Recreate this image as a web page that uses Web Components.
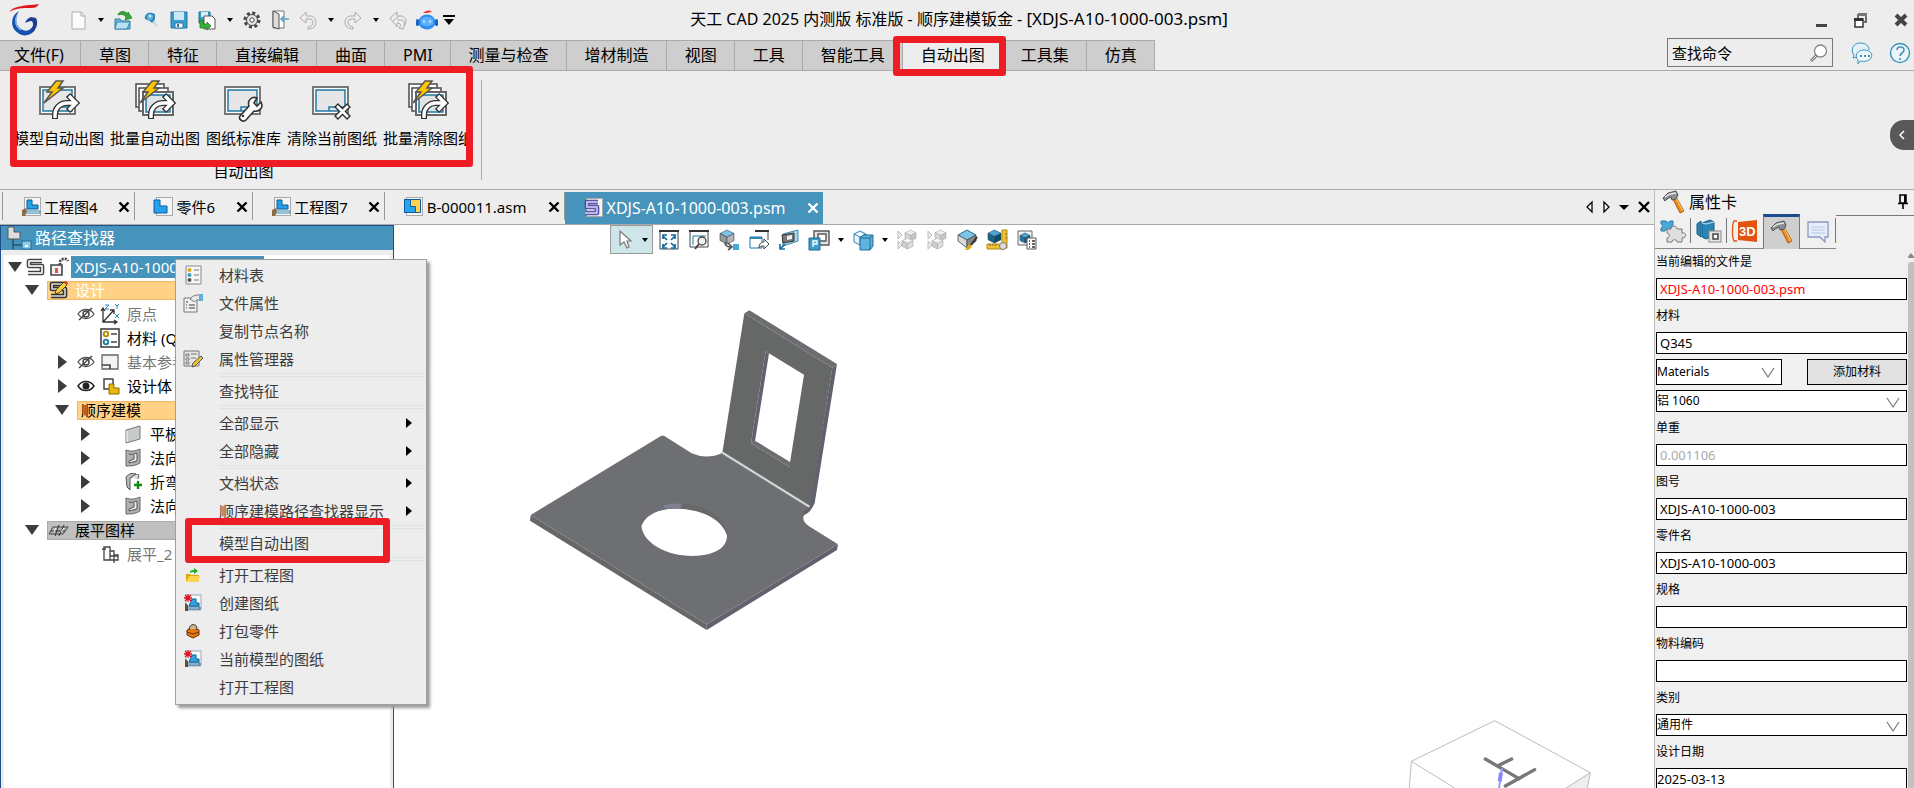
<!DOCTYPE html>
<html lang="zh-CN">
<head>
<meta charset="utf-8">
<title>天工 CAD 2025</title>
<style>
html,body{margin:0;height:100%;overflow:hidden}
body{font-family:"Noto Sans","Noto Sans CJK SC",sans-serif;font-size:15px;line-height:20px;color:#000;background:#ededed}
</style>
</head>
<body>
<cad-app></cad-app>
<script>
const BASE = '*,*::before,*::after{box-sizing:border-box}button,input,select{font:inherit;color:inherit;margin:0;padding:0;border:0;background:none;border-radius:0}button{display:flex;align-items:center;justify-content:center}cad-icon{flex:none}';
const def = (name, css, html) => customElements.define(name, class extends HTMLElement {
  connectedCallback() {
    if (this.shadowRoot) return;
    const root = this.attachShadow({ mode: 'open' });
    const t = document.createElement('template');
    t.innerHTML = `<style>${BASE}${css}</style>${typeof html === 'function' ? html(this) : html}`;
    root.append(t.content.cloneNode(true));
  }
});

/* shared icon parts */
const sheet = (x, y) => `<rect x="${x}" y="${y}" width="35" height="27" fill="#fff" stroke="#777" stroke-width="2"/><rect x="${x + 3}" y="${y + 3}" width="29" height="21" fill="#e6e6e6" stroke="#1b7aa5" stroke-width="1.5"/><path d="M${x + 16} ${y + 24}v-4h16" fill="none" stroke="#1b7aa5" stroke-width="1.5"/>`;
const bolt = '<path d="M17 1h7l-5 7h5L5 23l8-11H8z" fill="#ffc400" stroke="#555" stroke-width="1.5"/>';
const turn = '<path d="M16 39v-4c0-7 5-12 12-12h6M29 15l8 8-8 8" fill="none" stroke="#333" stroke-width="6"/><path d="M16 38v-3c0-7 5-12 12-12h7M30 16l7 7-7 7" fill="none" stroke="#fff" stroke-width="3.4"/>';
const multi = `<rect x="1" y="4" width="28" height="23" fill="#fff" stroke="#555" stroke-width="1.6"/><rect x="4" y="8" width="29" height="23" fill="#fff" stroke="#555" stroke-width="1.6"/><rect x="8" y="12" width="30" height="23" fill="#fff" stroke="#666" stroke-width="2"/><rect x="11" y="15" width="24" height="17" fill="#dfe3e5" stroke="#1b7aa5" stroke-width="1.5"/>${bolt}${turn}`;
const undo = '<path d="M2 8l6-6v4h4c4 0 6 3 6 6 0 4-3 7-8 7v-2c3 0 5-2 5-5 0-2-1-3-4-3H8v4z" fill="#eee" stroke="#aaa"/>';
const cube = (x, y, s, top, l, r, st = '#345') => `<path d="M${x} ${y + s * .25}L${x + s * .5} ${y}L${x + s} ${y + s * .25}L${x + s * .5} ${y + s * .5}z" fill="${top}" stroke="${st}" stroke-width=".6"/><path d="M${x} ${y + s * .25}v${s * .5}l${s * .5} ${s * .25}v-${s * .5}z" fill="${l}" stroke="${st}" stroke-width=".6"/><path d="M${x + s} ${y + s * .25}v${s * .5}l-${s * .5} ${s * .25}v-${s * .5}z" fill="${r}" stroke="${st}" stroke-width=".6"/>`;
const page = '<rect x="3.5" y=".5" width="16" height="18" fill="#f4f4f4" stroke="#aaa"/>';
const draft = `${page}<path d="M6 3h5v5h6v4H6z" fill="#27a0e6" stroke="#0b5c94"/><path d="M4 14h15v2H4z" fill="#fff" stroke="#2f86b5"/><path d="M1 13l4-2 1 3-2 5H1z" fill="#8a6b45"/>`;
const hammer = '<path d="M12 9l3-2 8 14-4 2z" fill="#f08c1e" stroke="#a85a0c"/><path d="M15 8l7 13" stroke="#ffd08a"/><path d="M2 8l5-5 8-2 2 4-2 4-4 1-1-3-4 2-2 2z" fill="#8c8f92" stroke="#4e5154"/><path d="M4 7l5-3 6-1" stroke="#e8e8e8" fill="none" stroke-width="1.4"/>';
const newSheet = '<rect x="2" y="1" width="15" height="15" fill="#f8f9fa" stroke="#9ab"/><path d="M5 12h10V9h-3V5H8z" fill="#32a4e0" stroke="#0b5c94"/><path d="M3 13h13v2H3z" fill="#fff" stroke="#0b5c94"/><path d="M1 17V9l3 2v6z" fill="#6d4b2c"/><path d="M1 1l6 6M7 1L1 7M4 0v8M0 4h8" stroke="#e3131b" stroke-width="1.3"/>';
const eyeoff = '<path d="M2 10c4-6 12-6 16 0-4 6-12 6-16 0z" fill="#fff" stroke="#555" stroke-width="1.3"/><circle cx="10" cy="10" r="3" fill="none" stroke="#444" stroke-width="1.4"/><path d="M3 16L16 4" stroke="#444" stroke-width="1.4"/>';
const cutout = '<path d="M3 2c5 2 10 1 14-1v14c-5 3-9 3-14 3z" fill="#aeb0b2" stroke="#666"/><path d="M6 6c3 1 5 0 8-1v8l-8 2v-2l5-2V7" fill="#e9e9e9" stroke="#555"/>';
const sPath = 'M17 4H4v5h13v7H3';
const ICONS = {
  logo: [32, 32, '<path d="M1 8C7 1 17 2 31 0c-2 3-4 4-8 4C14 4 8 4 1 8z" fill="#e3131b"/><path d="M11 7C2 12 2 24 10 29c5 4 13 3 17-3l-2-4c-3 5-8 6-12 3C7 21 7 13 11 7z" fill="#1552b0"/><path d="M9 11c-3 6-1 12 4 15" stroke="#8ab8f2" fill="none" stroke-width="1.4"/><path d="M17 19c1-3 3-5 6-6l5 1c3 6 0 13-6 15 3-5 4-9 2-12-3 0-5 1-7 2z" fill="#1a3f94"/>'],
  file: [20, 20, '<path d="M4 2h9l4 4v13H4z" fill="#fbfbfb" stroke="#9fb0bb"/><path d="M13 2v4h4" fill="none" stroke="#9fb0bb"/>'],
  open: [20, 20, '<path d="M2 9h5l2 2h8v8H2z" fill="#6fb7d8" stroke="#2f7fa8"/><path d="M4 12h13l-3 7H2z" fill="#b8e2f4" stroke="#3a8bb5"/><path d="M5 5c1-4 6-5 10-1v-2l4 6-7 2 1-3c-2-3-5-3-8-2z" fill="#36a736" stroke="#1c7a1c" stroke-width=".7"/>'],
  pin: [20, 20, '<path d="M13 8l4 10-8-7z" fill="#c3dbe6"/><path d="M9 11l-5-2c-1-4 3-7 7-6l3 1v5l-3 4z" fill="#2b86b5"/><circle cx="9" cy="7" r="3" fill="#6ab6dc"/><circle cx="9" cy="6" r="1.2" fill="#d8f0fa"/>'],
  save: [20, 20, '<path d="M2 2h16v16H2z" fill="#3b9ccc" stroke="#1f79a6"/><path d="M5 2h10v8H5z" fill="#c9e9f6"/><path d="M6 13h8v5H6z" fill="#fff" stroke="#1f79a6"/><path d="M8 14h2v3H8z" fill="#2b7da5"/>'],
  saveas: [20, 20, '<path d="M2 2h11v11H2z" fill="#3b9ccc" stroke="#1f6f99"/><path d="M4 2h7v5H4z" fill="#d4eef8"/><path d="M7 6h8l3 3v10H7z" fill="#fff" stroke="#555"/><path d="M6 10v4h4v-2l4 4-4 4v-2H3v-8z" fill="#3bb33b" stroke="#187018" stroke-width=".7"/>'],
  gear: [20, 20, '<circle cx="10" cy="10" r="7" fill="none" stroke="#444" stroke-width="3" stroke-dasharray="3 2.5"/><circle cx="10" cy="10" r="5.5" fill="#e8e8e8" stroke="#444"/><circle cx="10" cy="10" r="2.2" fill="#fff" stroke="#444"/>'],
  door: [20, 20, '<path d="M3 1h11v17H3z" fill="#fff" stroke="#777"/><path d="M3 1l6 3v15l-6-2z" fill="#ddd" stroke="#555"/><path d="M19 9h-7M14 6l-3 3 3 3" fill="none" stroke="#5aa5c8" stroke-width="1.5"/>'],
  undo: [20, 20, undo],
  redo: [20, 20, `<g transform="matrix(-1 0 0 1 20 0)">${undo}</g>`],
  undo2: [20, 20, '<path d="M2 8l7-6v4h4c3 0 5 2 5 6l-3 7-4-1c2-2 2-5-1-5H9v4z" fill="#eee" stroke="#aaa"/><path d="M5 11l6-5M9 10h4c3 0 4 2 3 5" fill="none" stroke="#aaa"/>'],
  robot: [22, 20, '<ellipse cx="11" cy="12" rx="8.5" ry="7.5" fill="#2e8ff0"/><path d="M5 9c4-3 8-3 12 0v5c-4 3-8 3-12 0z" fill="#5fb0fa"/><path d="M8 10v3M14 10v3" stroke="#b8e6ff" stroke-width="1.6"/><rect y="9" width="3" height="7" rx="1.5" fill="#1565c0"/><rect x="19" y="9" width="3" height="7" rx="1.5" fill="#1565c0"/><path d="M7 3c3-3 6-3 9-2-2 2-5 2-9 2z" fill="#e33"/>'],
  drop: [8, 8, '<path d="M1 2h6L4 6z" fill="#000"/>'],
  more: [12, 12, '<path d="M0 1h12v2H0zM1 5h10l-5 6z" fill="#000"/>'],
  min: [12, 16, '<path d="M0 12h11v3H0z" fill="#444"/>'],
  restore: [14, 16, '<path d="M4 2h8v8h-2M4 2v4" fill="none" stroke="#444" stroke-width="1.5"/><path d="M4 1h9v3H4z" fill="#777"/><rect x="1" y="7" width="8" height="8" fill="#fff" stroke="#333" stroke-width="1.5"/><path d="M0 6h9v3H0z" fill="#333"/>'],
  close: [14, 14, '<path d="M2 2l10 10M12 2L2 12" stroke="#444" stroke-width="4"/>'],
  x: [12, 12, '<path d="M1.5 1.5l9 9M10.5 1.5l-9 9" stroke="currentColor" stroke-width="2.4"/>'],
  search: [18, 18, '<path d="M7 11l-6 6" stroke="#777" stroke-width="3"/><path d="M7 11l-5.5 5.5" stroke="#eee"/><circle cx="10.5" cy="7" r="6" fill="#fff" stroke="#888" stroke-width="1.3"/>'],
  chat: [22, 22, '<path d="M3 13C-1 8 2 1 9 1c6 0 9 3 9 7" fill="#e4f1f7" stroke="#3c94bb"/><path d="M3 13l-1 3 4-1" fill="#e4f1f7" stroke="#3c94bb"/><path d="M9 19l-2 3v-4c-4-4-1-10 6-10s9 5 7 8-6 4-11 3z" fill="#f2f9fc" stroke="#3c94bb"/><path d="M9 14h2M13 14h2M17 14h2" stroke="#3c94bb" stroke-width="2"/>'],
  help: [22, 22, '<circle cx="11" cy="11" r="9.5" fill="#eef5f8" stroke="#3c94bb" stroke-width="1.4"/><path d="M8 8c0-4 7-4 7 0 0 3-4 3-4 6M11 16v2" fill="none" stroke="#3c94bb" stroke-width="1.6"/>'],
  left: [8, 12, '<path d="M6 2L2 6l4 4" fill="none" stroke="#fff" stroke-width="1.5"/>'],
  auto: [40, 40, sheet(1, 7) + bolt + turn],
  multi: [40, 40, multi],
  std: [40, 40, sheet(1, 7) + '<path d="M16 36l9-10c-2-6 3-10 8-8l-3 5 3 3 4-4c3 6-2 10-7 9l-8 9c-3 3-8-1-6-4z" fill="#fff" stroke="#333" stroke-width="1.6"/><circle cx="19" cy="36" r="1.2" fill="#333"/>'],
  clear: [40, 40, sheet(1, 7) + '<path d="M24 25l13 13M37 25L24 38" stroke="#333" stroke-width="5.5"/><path d="M25 26l11 11M36 26L25 37" stroke="#fff" stroke-width="2.6"/>'],
  draft: [20, 20, draft],
  part: [20, 20, page + '<path d="M1 3h6v6h7v7H1z" fill="#27a0f0" stroke="#0b5ca4"/>'],
  asm: [20, 20, page + '<path d="M1.5 2.5h16v13h-16z" fill="#ffd24d" stroke="#0b5ca4"/><path d="M1.5 2.5h6v7h5v6h-11z" fill="#2ba4ee" stroke="#0b5ca4"/>'],
  psm: [20, 20, `${page}<path d="M15 4H4v5h10v6H2" fill="none" stroke="#3b3a8f" stroke-width="4.6" stroke-linejoin="round"/><path d="M15 4H4v5h10v6H2" fill="none" stroke="#b9b4ea" stroke-width="2.4" stroke-linejoin="round"/>`],
  tl: [8, 12, '<path d="M7 1v10L2 6z" fill="#fff" stroke="#000" stroke-width="1.3"/>'],
  tr: [8, 12, '<path d="M1 1v10l5-5z" fill="#fff" stroke="#000" stroke-width="1.3"/>'],
  tdrop: [12, 12, '<path d="M1 4h10L6 9z" fill="#000"/>'],
  bigx: [14, 14, '<path d="M2 2l10 10M12 2L2 12" stroke="#000" stroke-width="2.4"/>'],
  finder: [26, 24, '<path d="M1 1h6v5h6v7H1z" fill="#dedede" stroke="#555"/><path d="M6 13v10M6 19h10" stroke="#234" fill="none"/><rect x="15" y="15" width="9" height="8" fill="#8cc9e6" stroke="#1f6f99"/><path d="M18 20h3" stroke="#fff" stroke-width="2"/>'],
  down: [14, 10, '<path d="M0 0h14L7 10z" fill="#3c3c3c"/>'],
  right: [10, 14, '<path d="M1 0v14l9-7z" fill="#3c3c3c"/>'],
  sub: [6, 10, '<path d="M0 0v10l6-5z" fill="#000"/>'],
  s: [20, 20, `<path d="${sPath}" fill="none" stroke="#444" stroke-width="4.6" stroke-linejoin="round"/><path d="${sPath}" fill="none" stroke="#ddd" stroke-width="2" stroke-linejoin="round"/>`],
  lock: [20, 20, '<path d="M2 8h11v10H2z" fill="#f3f3f3" stroke="#444" stroke-width="1.6"/><path d="M11 8V5c1-4 7-4 8-1" fill="none" stroke="#444" stroke-width="2.6" stroke-dasharray="2 1"/><path d="M6 11h3v5H6z" fill="#e4572a"/>'],
  sedit: [20, 20, `<path d="${sPath}" fill="none" stroke="#333" stroke-width="4.6" stroke-linejoin="round"/><path d="${sPath}" fill="none" stroke="#ddd" stroke-width="1.6" stroke-linejoin="round"/><path d="M7 14l1-4 8-8 3 3-8 8z" fill="#f6cb3c" stroke="#5c4a10"/><path d="M16 2l3 3 1-2-2-2z" fill="#d33"/>`],
  eyeoff: [20, 20, eyeoff],
  eye: [20, 20, '<path d="M2 10c4-6 12-6 16 0-4 6-12 6-16 0z" fill="#fff" stroke="#222" stroke-width="1.5"/><circle cx="10" cy="10" r="3.5" fill="#222"/>'],
  axes: [20, 20, '<path d="M3 4v14h14M3 18L14 6M1 7l2-3 2 3M14 16l3 2-3 2M10 6h4v4" fill="none" stroke="#333" stroke-width="1.3"/><path d="M5 1h4L5 5h4M15 0l2 2 2-2M17 2v3M15 10l4 4M19 10l-4 4" fill="none" stroke="#2786b5"/>'],
  mat: [20, 20, '<rect x="1" y="1" width="18" height="18" fill="#fff" stroke="#444" stroke-width="1.6"/><circle cx="6" cy="6" r="2.3" fill="none" stroke="#b58a00" stroke-width="1.8"/><circle cx="6" cy="14" r="2.3" fill="none" stroke="#1b7aa5" stroke-width="1.8"/><path d="M11 6h6M11 14h6" stroke="#444" stroke-width="1.3"/>'],
  plane: [20, 20, '<path d="M2 3h16v14H2z" fill="#f3f3f3" stroke="#666" stroke-width="1.3"/><path d="M2 13h8v4" fill="none" stroke="#444" stroke-width="1.6"/>'],
  body: [20, 20, '<path d="M4 3h9v10H4z" fill="#fff" stroke="#444" stroke-width="1.5"/><path d="M9 8h5v4h5v6H9z" fill="#e8b90c" stroke="#8c6c00"/>'],
  plate: [20, 20, '<path d="M3 6l14-4v13L3 19z" fill="#c8cbcc" stroke="#777"/><path d="M4 7v11" fill="none" stroke="#fff"/>'],
  cutout: [20, 20, cutout],
  bend: [20, 20, '<path d="M3 5c3-4 7-4 10-3l-6 4v12l-3-3z" fill="#b9bbbd" stroke="#555"/><path d="M8 6c3-4 6-4 8-3l-1 4" fill="#ddd" stroke="#555"/><path d="M15 9v8M11 13h8" stroke="#128a12" stroke-width="2.4"/>'],
  flat: [20, 20, '<path d="M5 7h15l-5 7H1z" fill="#b4b6b8" stroke="#444"/><path d="M11 5l-4 11M16 5l-5 11M3 11h14" stroke="#333"/><path d="M8 8l-2 4M16 8l-3 4" stroke="#fff" fill="none"/>'],
  flat2: [20, 20, '<path d="M4 3h6v4h4v4h4v5H4z" fill="#fff" stroke="#444" stroke-width="1.3"/><path d="M2 5h4M10 7v9M14 11v8M10 12h8" fill="none" stroke="#444" stroke-width="1.3"/>'],
  bom: [20, 20, '<path d="M3 1h15v18H3z" fill="#f7f7f7" stroke="#888"/><circle cx="6.5" cy="5" r="2" fill="#dba914"/><circle cx="6.5" cy="10" r="2" fill="#3e9cca"/><circle cx="6.5" cy="15" r="2" fill="#555"/><path d="M11 5h5M11 10h5M11 15h5" stroke="#777"/>'],
  fprop: [20, 20, '<path d="M1 5h13v14H1z" fill="#f1f1f1" stroke="#777"/><path d="M6 12h6M6 15h6M3 12h1M3 15h1M3 9h2" stroke="#777" stroke-width="1.3"/><path d="M7 6c3-4 6-4 10-4v5c-4-1-5 3-7 1z" fill="#e6e6e6" stroke="#777"/><path d="M16 1h4v7h-4z" fill="#5cb0da"/>'],
  pman: [20, 20, '<path d="M1 2h15v15H1z" fill="#e6e6e6" stroke="#777"/><path d="M3 5h3v2H3zM3 9h3v2H3zM3 13h3v2H3z" fill="#fff" stroke="#777"/><path d="M8 5h6M8 9h5" stroke="#777"/><path d="M9 18l1-4 8-7 2 2-8 8z" fill="#f2c230" stroke="#555"/>'],
  folder: [14, 14, '<path d="M0 6h4l1 1h8v6H0z" fill="#e3a500"/><path d="M3 8h11l-2 6H0z" fill="#ffd34d"/><path d="M4 5c0-3 2-3 4-3V0l4 3-4 3V4C6 4 5 4 4 5z" fill="#23b023"/>'],
  newsheet: [18, 18, newSheet],
  bag: [14, 14, '<path d="M1 6l6-2 6 2v5l-6 3-6-3z" fill="#e5780f" stroke="#6a3205"/><path d="M3 5c1-6 8-6 8 0" fill="#c9b98c" stroke="#333"/><path d="M1 8l6 2 6-2" stroke="#6a3205" fill="none"/>'],
  cursor: [20, 20, '<path d="M5 1v14l4-3 3 6 2-1-2-6h4z" fill="#fdfdfd" stroke="#777" stroke-width="1.2"/>'],
  fit: [20, 20, '<path d="M1 1h18v18H1z" fill="#fff" stroke="#444"/><path d="M0 0h20v2H0z" fill="#333"/><path d="M4 6l4 4M16 6l-4 4M4 17l4-4M16 17l-4-4M4 9V5h4M12 5h4v4M4 14v4h4M12 18h4v-4" fill="none" stroke="#0e6b9c" stroke-width="1.7"/>'],
  zoomwin: [20, 20, '<path d="M1 1h18v16H1z" fill="#fff" stroke="#444"/><path d="M0 0h20v2H0z" fill="#333"/><path d="M4 15V6h13" fill="none" stroke="#1b7aa5"/><circle cx="13" cy="11" r="4" fill="#f4f4f4" stroke="#444" stroke-width="1.3"/><path d="M10 14l-4 5" stroke="#444" stroke-width="2"/>'],
  cube1: [20, 20, cube(1, 0, 14, '#7cc6e8', '#999', '#b4b4b4') + '<path d="M6 12c0 4 3 5 6 5M9 13l4 4-4 3" fill="none" stroke="#555" stroke-width="1.6"/><rect x="14" y="14" width="6" height="6" fill="#49a8d6"/>'],
  win2: [20, 20, '<path d="M7 1h12v9" fill="none" stroke="#444"/><path d="M6 0h14v2H6z" fill="#333"/><path d="M1 7h12v11H1z" fill="#fff" stroke="#1b7aa5"/><path d="M1 7h12v2H1z" fill="#2b86b5"/><path d="M10 18c0-5 3-6 5-6V9l5 5-5 5v-3c-2 0-3 0-5 2z" fill="#fff" stroke="#444"/>'],
  view: [20, 20, '<path d="M4 4l15-4v11L4 16z" fill="#a8d9ee" stroke="#3788ae"/><path d="M3 5l12-2v8L4 13z" fill="#777" stroke="#333"/><path d="M8 6l5-1v4l-5 1z" fill="#eee"/><path d="M6 14l-5 5M1 14v5h5" fill="none" stroke="#1d6fa0" stroke-width="1.7"/>'],
  copyview: [20, 20, '<path d="M5 1h15v14H5z" fill="#e2e2e2" stroke="#555" stroke-width="1.4"/><path d="M9 4h8v7H9z" fill="#fff" stroke="#555" stroke-width="1.4"/><path d="M0 8h11v12H0z" fill="#3d9ccb" stroke="#1b6890"/><path d="M4 17v-6h4v3H4" fill="none" stroke="#fff" stroke-width="1.3"/>'],
  cubes: [20, 20, '<path d="M1 4l6-3 6 3v8l-6 3-6-3zM1 4l6 3 6-3M7 7v8" fill="#eaf6fb" stroke="#2b86b5"/><path d="M7 8l3-3h10v11l-3 4H7z" fill="#5fb3dc" stroke="#1f6f99"/><path d="M7 8h10l3-3M17 8v12" fill="none" stroke="#1f6f99"/>'],
  dim: [20, 20, cube(8, 0, 11, '#eee', '#d8d8d8', '#c6c6c6', '#aaa') + cube(5, 8, 11, '#f3f3f3', '#ccc', '#ddd', '#aaa') + '<path d="M1 1v8l4-4zM1 11v8l4-4z" fill="#eee" stroke="#bbb"/>'],
  paint: [20, 20, '<path d="M1 5l9-5 9 5-9 5z" fill="#7cc6e8" stroke="#2b6a8a"/><path d="M1 5v6l9 7v-8z" fill="#d8d8d8" stroke="#666"/><path d="M19 5v6l-9 7v-8z" fill="#888" stroke="#555"/><path d="M8 20l4-6 3 2c-2 4-4 4-7 4z" fill="#e2aa12"/><path d="M14 15l6-8" stroke="#333" stroke-width="2"/>'],
  measure: [20, 20, cube(1, 0, 13, '#49a8d6', '#14658f', '#0a4c6e') + '<path d="M15 0h5v18h-5zM0 14h16v5H0z" fill="#f2c230" stroke="#b08a10"/><circle cx="16" cy="16" r="3.5" fill="#ddd" stroke="#777"/><path d="M3 14v2M6 14v2M9 14v2M18 4h2M18 8h2" stroke="#765"/>'],
  props: [20, 20, '<path d="M1 1h14v14H1z" fill="#f4f4f4" stroke="#666"/>' + cube(3, 3, 10, '#49a8d6', '#1b7aa5', '#0d5f87') + '<path d="M10 8h9v11h-9z" fill="#fff" stroke="#555"/><path d="M12 11h1M12 14h1M12 17h1M15 11h3M15 14h3M15 17h3" stroke="#333" stroke-width="1.3"/>'],
  hammer: [26, 24, hammer],
  puzzle: [26, 24, '<path d="M1 2h5c1 2 3 2 4 0h3v4c-2 1-2 3 0 4v2H9c-1-2-3-2-4 0H1V9c2-1 2-3 0-4z" fill="#49a8d6" stroke="#2b7da5"/><path d="M7 10h4c0-4 6-4 6 0h5v4c5-1 5 5 0 5v4h-5c0-3-5-3-5 0H7v-4c3 0 3-5 0-5z" fill="#dcdedf" stroke="#777"/>'],
  books: [26, 24, '<path d="M1 5l4-3v16l-4-3zM6 4l8-3 4 2v14l-8 3-4-2z" fill="#2b86b5" stroke="#165c82"/><path d="M6 4l4 1 8-2" fill="none" stroke="#bfe4f3"/><rect x="13" y="12" width="12" height="11" fill="#e5e5e5" stroke="#888"/><path d="M17 15h5v5h-5z" fill="#fff" stroke="#444" stroke-width="1.5"/>'],
  tag3d: [26, 24, '<path d="M5 2H2C0 5 0 19 2 22h3" fill="none" stroke="#e3520f" stroke-width="1.3"/><path d="M6 3l19-2v22L6 21z" fill="#e3520f"/><text x="7" y="17" font-family="Liberation Sans,sans-serif" font-weight="700" font-size="13" fill="#fff">3D</text>'],
  note: [26, 24, '<path d="M3 3h20v15h-3v5l-5-5H3z" fill="#e6eef9" stroke="#8a99bd" stroke-width="1.3"/><path d="M6 8h14M6 11h14M6 14h14" stroke="#b9c6df"/>'],
  thumb: [10, 16, '<path d="M2 1h6v8H2zM0 9.5h10M5 10v5" fill="none" stroke="#000" stroke-width="1.6"/><path d="M6 1h2v8H6z" fill="#000"/>'],
  chev: [14, 12, '<path d="M1 1l6 9 6-9" fill="none" stroke="#777" stroke-width="1.2"/>'],
  up: [8, 6, '<path d="M0 5h8L4 0z" fill="#888"/>']
};
def('cad-icon', ':host{display:block;line-height:0}svg{display:block;overflow:visible}', h => {
  const [w, ht, body] = ICONS[h.getAttribute('name')];
  return `<svg width="${w}" height="${ht}" viewBox="0 0 ${w} ${ht}" aria-hidden="true">${body}</svg>`;
});
const ic = n => `<cad-icon name="${n}"></cad-icon>`;

/* red callout frame laid over other parts */
def('mark-frame', ':host{position:absolute;z-index:5;border:7px solid #ee1c25;border-radius:3px;pointer-events:none}', '');

def('title-bar', `
:host{display:flex;height:40px;align-items:center;position:relative}
.quick{display:flex;align-items:center;padding-left:8px;height:36px}
.quick button{height:20px;margin-right:8px}
.quick button.d{margin-left:1px}
.quick button:last-child{margin-left:-3px}
.quick button.logo{height:32px;width:32px;margin-right:28px}
h1{position:absolute;left:4px;right:0;text-align:center;margin:0;font-size:16px;font-weight:400;line-height:36px;top:1px;pointer-events:none}
h1 span{font-size:17px}
.win{margin-left:auto;display:flex;gap:26px;padding-right:6px;align-items:center}`,
`<div class="quick"><button class="logo" aria-label="天工">${ic('logo')}</button>${['file', 'drop', 'open', 'pin', 'save', 'saveas', 'drop', 'gear', 'door', 'undo', 'drop', 'redo', 'drop', 'undo2', 'robot', 'more'].map(n => `<button class="${n === 'drop' ? 'd' : ''}" aria-label="${n}">${ic(n)}</button>`).join('')}</div>
<h1>天工 CAD 2025 内测版 标准版 - 顺序建模钣金 - <span>[XDJS-A10-1000-003.psm]</span></h1>
<div class="win"><button aria-label="min">${ic('min')}</button><button aria-label="restore">${ic('restore')}</button><button aria-label="close">${ic('close')}</button></div>`);

def('ribbon-tabs', `
:host{display:flex;height:31px;border-bottom:1px solid #aaa;position:relative}
nav{display:flex;border-top:1px solid #aaa;height:31px}
button{position:relative;padding:0 17px 2px 18px;background:#cecece;border-right:1px solid #aaa;border-bottom:1px solid #aaa;font-size:16px;white-space:nowrap}
button:first-child{padding:0 16px 2px 14px}
button.on{background:#ededed;border-bottom-color:#ededed}
mark-frame{left:-10px;right:-4px;top:-5px;height:40px}
.tools{margin-left:auto;display:flex;align-items:center;height:29px;margin-top:-2px;padding-right:3px}
label{display:flex;align-items:center;width:166px;height:29px;border:1px solid #777;padding:0 4px}
input{flex:1;min-width:0;outline:0;height:27px}
input::placeholder{color:#000;opacity:1}
.tools button{all:unset;margin-left:18px}
.tools button+button{margin-left:16px}`,
`<nav>${['文件(F)', '草图', '特征', '直接编辑', '曲面', 'PMI', '测量与检查', '增材制造', '视图', '工具', '智能工具', '自动出图', '工具集', '仿真'].map(t => `<button class="${t === '自动出图' ? 'on' : ''}">${t}${t === '自动出图' ? '<mark-frame></mark-frame>' : ''}</button>`).join('')}</nav>
<div class="tools"><label><input aria-label="查找命令" placeholder="查找命令">${ic('search')}</label><button aria-label="消息">${ic('chat')}</button><button aria-label="帮助">${ic('help')}</button></div>`);

def('ribbon-bar', `
:host{display:flex;height:119px;border-bottom:1px solid #aaa;position:relative}
section{position:relative;margin:9px 0;padding-left:11px;padding-right:5px;border-right:1px solid #aaa}
.row{display:flex}
.row button{flex-direction:column;padding:0 3px;gap:8px;white-space:nowrap}
h2{margin:13px 0 0;text-align:center;font-size:15px;font-weight:400;line-height:20px}
mark-frame{left:10px;top:-14px;width:463px;height:101px}
.fold{position:absolute;right:0;top:49px;width:24px;height:30px;border-radius:14px 0 0 14px;background:#585858}`,
`<section><div class="row">${[['auto', '模型自动出图'], ['multi', '批量自动出图'], ['std', '图纸标准库'], ['clear', '清除当前图纸'], ['multi', '批量清除图纸']].map(([i, t]) => `<button>${ic(i)}<span>${t}</span></button>`).join('')}</div><h2>自动出图</h2><mark-frame></mark-frame></section>
<button class="fold" aria-label="展开">${ic('left')}</button>`);

def('doc-tab', `
:host{display:flex;align-items:center;height:28px;border-right:1px solid #999;padding:2px 4px 0 18px;white-space:nowrap}
:host([active]){background:#4693bb;color:#fff;height:32px;padding-bottom:0;border:0;font-size:16px;padding-top:0}
span{margin:0 20px 0 3px}
:host([wide]) span{margin:0 21px 0 4px}`,
h => `${ic(h.getAttribute('icon'))}<span><slot></slot></span><button aria-label="关闭">${ic('x')}</button>`);

def('doc-tabs', `
:host{display:flex;height:35px;border-bottom:1px solid #aaa;padding:2px 0 0 2px}
.t{display:flex;border-left:1px solid #999;height:28px}
.ctl{margin-left:auto;display:flex;align-items:center;gap:7px;padding-right:3px;height:30px}
.ctl button:nth-child(1){margin-right:3px}`,
`<div class="t"><doc-tab icon="draft">工程图4</doc-tab><doc-tab icon="part" wide>零件6</doc-tab><doc-tab icon="draft">工程图7</doc-tab><doc-tab icon="asm" wide>B-000011.asm</doc-tab><doc-tab icon="psm" active wide>XDJS-A10-1000-003.psm</doc-tab></div>
<div class="ctl">${['tl', 'tr', 'tdrop', 'bigx'].map(n => `<button aria-label="${n}">${ic(n)}</button>`).join('')}</div>`);

def('tree-row', `
:host{display:flex;height:24px;align-items:center;white-space:nowrap}
.arrow{flex:none;width:14px;display:flex;justify-content:center}
.body{display:flex;align-items:center;gap:4px;height:20px}
.text{padding-left:3px;line-height:20px}
:host([tone=sel]) .text{background:#4693bb;color:#fff;width:193px;padding:0 4px;margin-left:-2px;line-height:22px}
:host([tone=hot]) .body,:host([tone=grey]) .body{background:#ffd285;border:1px solid #f0b766;width:220px;height:19px}
:host([tone=grey]) .body{background:#c0c0c0;border-color:#aaa}
:host([tone=dim]){color:#777}`,
h => {
  const a = k => h.getAttribute(k);
  const icons = (a('icons') || '').split(' ').filter(Boolean).map(ic).join('');
  return `${a('arrow') ? `<div class="arrow" style="margin-left:${a('indent')}px">${ic(a('arrow'))}</div>` : ''}<div class="body" style="margin-left:${a(a('arrow') ? 'gap' : 'indent')}px">${icons}<span class="text"><slot></slot></span></div>`;
});

def('path-finder', `
:host{display:flex;flex-direction:column;flex:none;width:394px;border:1px solid #1f4e8c;border-bottom:0;background:#ededed;overflow:hidden}
header{display:flex;align-items:center;gap:2px;height:24px;padding-left:6px;background:#4693bb;color:#fff;font-size:16px;flex:none}
.tree{flex:1;margin:5px 3px 0;background:#fff}
tree-row:first-child{height:23px}
.w{color:#fff}`,
`<header>${ic('finder')}<span>路径查找器</span></header><div class="tree">
<tree-row tone="sel" arrow="down" indent="4" gap="3" icons="s lock">XDJS-A10-1000-003.psm</tree-row>
<tree-row tone="hot" arrow="down" indent="21" gap="8" icons="sedit"><span class="w">设计</span></tree-row>
<tree-row tone="dim" indent="72" icons="eyeoff axes">原点</tree-row>
<tree-row indent="96" icons="mat">材料 (Q345)</tree-row>
<tree-row tone="dim" arrow="right" indent="51" gap="7" icons="eyeoff plane">基本参考平面</tree-row>
<tree-row arrow="right" indent="51" gap="7" icons="eye body">设计体</tree-row>
<tree-row tone="hot" arrow="down" indent="51" gap="8">顺序建模</tree-row>
<tree-row arrow="right" indent="74" gap="31" icons="plate">平板 1</tree-row>
<tree-row arrow="right" indent="74" gap="31" icons="cutout">法向除料 1</tree-row>
<tree-row arrow="right" indent="74" gap="31" icons="bend">折弯 1</tree-row>
<tree-row arrow="right" indent="74" gap="31" icons="cutout">法向除料 2</tree-row>
<tree-row tone="grey" arrow="down" indent="21" gap="8" icons="flat">展平图样</tree-row>
<tree-row tone="dim" indent="96" icons="flat2">展平_2</tree-row>
</div>`);

def('menu-item', `
:host{display:block}
button{width:100%;height:28px;justify-content:flex-start;color:#3c3c3c;padding-right:14px}
.i{width:34px;display:flex;justify-content:center;margin-right:9px}
.s{margin-left:auto}`,
h => `<button role="menuitem"><span class="i">${h.getAttribute('icon') ? ic(h.getAttribute('icon')) : ''}</span><slot></slot>${h.hasAttribute('sub') ? `<span class="s">${ic('sub')}</span>` : ''}</button>`);

def('context-menu', `
:host{display:block;position:absolute;z-index:4;left:175px;top:69px;width:252px;background:#ededed;border:1px solid #a0a0a0;box-shadow:3px 3px 3px #999;padding:1px 0 3px}
hr{margin:0 1px 0 43px;height:4px;border:solid #dde2e6;border-width:1px 0}
mark-frame{left:9px;top:258px;width:205px;height:45px}`,
`<menu-item icon="bom">材料表</menu-item><menu-item icon="fprop">文件属性</menu-item><menu-item>复制节点名称</menu-item><menu-item icon="pman">属性管理器</menu-item><hr><menu-item>查找特征</menu-item><hr><menu-item sub>全部显示</menu-item><menu-item sub>全部隐藏</menu-item><hr><menu-item sub>文档状态</menu-item><menu-item sub>顺序建模路径查找器显示</menu-item><hr><menu-item>模型自动出图</menu-item><hr><menu-item icon="folder">打开工程图</menu-item><menu-item icon="newsheet">创建图纸</menu-item><menu-item icon="bag">打包零件</menu-item><menu-item icon="newsheet">当前模型的图纸</menu-item><menu-item>打开工程图</menu-item><mark-frame></mark-frame>`);

def('model-view', `
:host{display:block;flex:1;position:relative;background:#fff;overflow:hidden;min-width:0}
.bar{display:flex;align-items:center;padding-left:216px;height:29px}
.bar button{height:20px;margin-right:10px}
.bar button.d{margin:0 8px 0 -2px}
.bar .cur{width:43px;height:29px;gap:6px;margin-right:6px;background:#cee6ea;border:1px solid #999}
.part{position:absolute;left:106px;top:65px}
.cube{position:absolute;right:0;bottom:0}`,
`<div class="bar"><button class="cur" aria-label="选择">${ic('cursor')}${ic('drop')}</button>${['fit', 'zoomwin', 'cube1', 'win2', 'view', 'copyview', 'drop', 'cubes', 'drop', 'dim', 'dim', 'paint', 'measure', 'props'].map(n => `<button class="${n === 'drop' ? 'd' : ''}" aria-label="${n}">${ic(n)}</button>`).join('')}</div>
<svg class="part" width="380" height="350" viewBox="0 0 1140 1050">
<path d="M92 675L620 1003V1020L90 692z" fill="#666868"/><path d="M620 1003L1014 763L1011 780L620 1020z" fill="#62616e"/>
<path fill-rule="evenodd" fill="#6e6f73" d="M92 675L484 437H492L575 490Q620 510 668 488L928 650L910 680Q908 695 926 708L1014 763L620 1003zM424 706C428 760 500 798 578 798C640 796 682 776 681 735C676 690 610 656 540 654C480 652 430 668 424 706z"/>
<path d="M424 710C424 660 480 638 532 639C610 642 684 680 683 742C670 690 610 660 540 656C480 652 434 674 424 710z" fill="#676969"/><path d="M424 710C424 660 480 638 550 640L545 656C480 652 434 674 424 710z" fill="#6f6f7d"/><path d="M490 646Q515 638 545 641L540 656L495 655z" fill="#7f8090"/>
<path d="M997 233L1011 222L944 640Q930 670 912 675L910 665L928 650z" fill="#62616e"/>
<path fill-rule="evenodd" fill="#666868" d="M733 70L997 233L930 652L667 488zM797 184L753 460L868 530L912 254z"/>
<path d="M733 70L748 61L1011 222L997 233z" fill="#6c6d70"/><path d="M797 184L807 190L765 454L753 460z" fill="#62616e"/><path d="M753 460L765 452L874 518L868 530z" fill="#6c6d70"/>
<path d="M667 488L928 650" stroke="#8f9696" stroke-width="9"/><path d="M667 488L928 650" stroke="#e6eaea" stroke-width="4"/></svg>
<svg class="cube" width="264" height="88" viewBox="0 0 792 264" fill="none" stroke="#bcbcbc" stroke-width="3"><path d="M600 218L528 264H592z" fill="#eee" stroke="none"/><path d="M58 264L64 184L314 62L601 218L592 264M64 184L194 264M601 218L528 264"/><g stroke="#777" stroke-width="10" stroke-linecap="round"><path d="M286 177L387 236M365 177L324 197M434 209L346 258"/></g><path d="M336 204L327 264" stroke="#99f" stroke-width="6"/><path d="M333 218L329 244" stroke="#88f" stroke-width="12"/></svg>`);

def('prop-field', `
:host{display:block}
label{display:block;height:32px;line-height:20px;padding-top:6px}
.box{position:relative;display:flex;height:22px;border:1px solid #000;background:#fff}
input,select{width:100%;height:20px;outline:0;appearance:none;padding-left:3px;font-size:13px}
:host([flush]) :is(input,select){padding-left:0}
select{font-size:12px}
:host([red]) input{color:#f00}
:host([grey]) input{color:#aaa}
:host([tall]) .box{height:26px}
:host([tall]) select{height:24px}
cad-icon{position:absolute;right:6px;top:6px;pointer-events:none}
:host([tall]) cad-icon{top:7px}`,
h => {
  const a = k => h.getAttribute(k) || '';
  const bare = h.hasAttribute('bare');
  const tie = bare ? `aria-label="${a('label')}"` : 'id="f"';
  return `${bare ? '' : `<label for="f">${a('label')}</label>`}<div class="box">${h.hasAttribute('select') ? `<select ${tie}><option>${a('value')}</option></select>${ic('chev')}` : `<input ${tie} value="${a('value')}"${h.hasAttribute('grey') ? ' readonly' : ''}>`}</div>`;
});

def('prop-card', `
:host{display:flex;flex-direction:column;flex:none;width:260px;border-left:1px solid #bbb;background:#f0f0f0;overflow:hidden;font-size:12px}
header{display:flex;align-items:center;height:24px;padding:0 6px;font-size:16px;gap:2px;flex:none}
header cad-icon:last-child{margin-left:auto}
nav{display:flex;height:35px;flex:none}
nav button{width:36px;position:relative;border-bottom:1px solid #888}
nav button.sep::after{content:"";position:absolute;right:0;top:4px;height:25px;width:1px;background:#777}
nav button.on{width:37px;background:#cfcfcf;border:solid #777;border-width:3px 1px 0;border-top-color:#1d4a8f;padding-bottom:3px}
nav i{flex:1;border-top:1px solid #777;margin-top:1px}
.main{display:flex;flex:1;min-height:0}
form{flex:1;min-width:0;padding:0 1px;overflow:hidden;margin-top:-3px}
.pair{display:flex;justify-content:space-between;margin:5px 0}
.pair prop-field{width:126px}
.pair button{width:100px;height:26px;border:1px solid #000;background:#e1e1e1}
.bar{width:6px;display:flex;flex-direction:column;align-items:center;padding-top:4px;gap:3px;overflow:hidden}
.bar i{flex:1;width:6px;background:#c1c1c1;border-radius:3px 0 0 0}`,
`<header>${ic('hammer')}<span>属性卡</span>${ic('thumb')}</header>
<nav><button class="sep" aria-label="零件">${ic('puzzle')}</button><button class="sep" aria-label="库">${ic('books')}</button><button aria-label="3D">${ic('tag3d')}</button><button class="on" aria-label="属性卡">${ic('hammer')}</button><button class="sep" aria-label="注释">${ic('note')}</button><i></i></nav>
<div class="main"><form>
<prop-field label="当前编辑的文件是" value="XDJS-A10-1000-003.psm" red></prop-field>
<prop-field label="材料" value="Q345"></prop-field>
<div class="pair"><prop-field bare tall select flush label="材料库" value="Materials"></prop-field><button type="button">添加材料</button></div>
<prop-field bare select flush label="材料名" value="铝 1060"></prop-field>
<prop-field label="单重" value="0.001106" grey></prop-field>
<prop-field label="图号" value="XDJS-A10-1000-003"></prop-field>
<prop-field label="零件名" value="XDJS-A10-1000-003"></prop-field>
<prop-field label="规格"></prop-field>
<prop-field label="物料编码"></prop-field>
<prop-field select flush label="类别" value="通用件"></prop-field>
<prop-field label="设计日期" value="2025-03-13" flush></prop-field>
</form><div class="bar">${ic('up')}<i></i></div></div>`);

def('cad-app', `
:host{display:flex;flex-direction:column;height:100vh;overflow:hidden}
main{flex:1;min-height:0;display:flex;position:relative}
.left{flex:1;min-width:0;display:flex;flex-direction:column}
.work{flex:1;min-height:0;display:flex}`,
`<title-bar></title-bar><ribbon-tabs></ribbon-tabs><ribbon-bar></ribbon-bar>
<main><div class="left"><doc-tabs></doc-tabs><div class="work"><path-finder></path-finder><model-view></model-view></div></div><prop-card></prop-card><context-menu></context-menu></main>`);
</script>
</body>
</html>
